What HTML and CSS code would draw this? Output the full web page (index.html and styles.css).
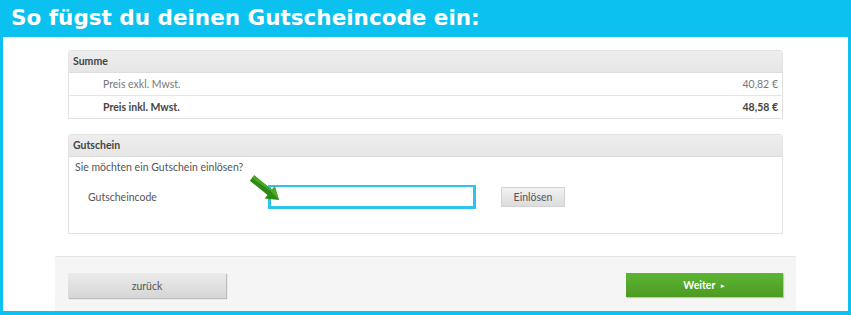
FILE: index.html
```html
<!DOCTYPE html>
<html lang="de">
 <head>
  <meta charset="UTF-8">
  <title>Gutschein</title>
  <link rel="stylesheet" href="styles.css">
 </head>
<body>
<div class="rahmen">
 <h1 class="titel">So fügst du deinen Gutscheincode ein:</h1>

 <div class="inhalt">

  <!-- Summe -->
  <div class="box">
   <div class="box-kopf">Summe</div>
   <div class="zeile">
    <span>Preis exkl. Mwst.</span>
    <span>40,82 €</span>
   </div>
   <div class="zeile fett">
    <span>Preis inkl. Mwst.</span>
    <span>48,58 €</span>
   </div>
  </div>

  <!-- Gutschein -->
  <div class="box gutschein">
   <div class="box-kopf">Gutschein</div>
   <p class="frage">Sie möchten ein Gutschein einlösen?</p>
   <div class="code-zeile">
    <label for="code">Gutscheincode</label>
    <div class="feld">
     <svg class="pfeil" width="32" height="30" viewBox="0 0 32 30">
      <polygon points="5.2,2.3 22.9,16.7 25.8,13.2 30,27 15.6,25.6 18.5,22.1 0.8,7.7" fill="#2E8A14"/>
      <polygon points="5.2,2.3 22.9,16.7 25.8,13.2 30,27 21,17.5 3,5" fill="#4AAA26"/>
     </svg>
     <input type="text" id="code">
    </div>
    <button type="button" class="einloesen">Einlösen</button>
   </div>
  </div>

 </div>

 <div class="fuss">
  <button type="button" class="zurueck">zurück</button>
  <button type="button" class="weiter">Weiter <span class="dreieck">&#9658;</span></button>
 </div>
</div>
</body>
</html>
```

FILE: styles.css
```css
body {
 margin: 0;
 background: #FFFFFF;
 font-family: Lato, Arial, sans-serif;
 font-size: 10.5px;
 color: #555555;
}

/* Rahmen */
.rahmen {
 box-sizing: border-box;
 width: 851px;
 height: 315px;
 border: Solid 3px #0BC1EF;
 border-bottom-width: 4px;
 border-top: 0;
 background: #FFFFFF;
}

.titel {
 margin: 0 -3px;
 height: 37px;
 padding-left: 11px;
 background: #0BC1EF;
 color: #FFFFFF;
 font-family: "DejaVu Sans", Verdana, sans-serif;
 font-weight: Bold;
 font-size: 21.5px;
 line-height: 36px;
}

.inhalt {
 padding: 13px 65px 0 65px;
}

/* Boxen */
.box {
 border: Solid 1px #E2E2E2;
 border-radius: 3px 3px 0 0;
 margin-bottom: 15px;
}

.box-kopf {
 height: 21px;
 line-height: 21px;
 padding-left: 4px;
 background: linear-gradient(#EEEEEE, #E6E6E6);
 border-bottom: Solid 1px #DDDDDD;
 font-weight: Bold;
 color: #444444;
}

.zeile {
 display: flex;
 justify-content: space-between;
 height: 22px;
 line-height: 22px;
 padding: 0 4px 0 34px;
 border-bottom: Solid 1px #E6E6E6;
 color: #777777;
}

.zeile:last-child {
 border-bottom: 0;
}

.zeile.fett {
 font-weight: Bold;
 color: #444444;
}

.gutschein {
 height: 98px;
 margin-bottom: 22px;
}

.frage {
 margin: 4px 0 0 6px;
 color: #555555;
}

.code-zeile {
 display: flex;
 align-items: center;
 margin-top: 12px;
}

.code-zeile label {
 width: 180px;
 padding-left: 19px;
}

.feld {
 position: relative;
}

.pfeil {
 position: absolute;
 left: -19px;
 top: -12px;
}

input#code {
 width: 202px;
 height: 19px;
 border: Solid 3px #2CC3EF;
 border-top-width: 2px;
 padding: 0;
 outline: 0;
 background: #FFFFFF;
}

button {
 font-family: Lato, Arial, sans-serif;
 font-size: 10.5px;
 cursor: Pointer;
}

.einloesen {
 margin-left: 25px;
 width: 64px;
 height: 20px;
 padding: 0;
 border: Solid 1px #D2D2D2;
 background: linear-gradient(#F2F2F2, #DCDCDC);
 color: #555555;
}

/* Fuss */
.fuss {
 display: flex;
 justify-content: space-between;
 align-items: flex-start;
 margin: 0 52px;
 height: 55px;
 padding: 16px 13px 0 13px;
 box-sizing: border-box;
 background: #F5F5F5;
 border-top: Solid 1px #E6E6E6;
}

.zurueck {
 width: 158px;
 height: 25px;
 border: 0;
 background: linear-gradient(#EBEBEB, #D6D6D6);
 box-shadow: 1px 1px 1px #BBBBBB;
 color: #555555;
}

.weiter {
 width: 157px;
 height: 24px;
 border: 0;
 background: linear-gradient(#5DB534, #4C9A22);
 box-shadow: 1px 1px 1px #C7C7A0;
 color: #FFFFFF;
 font-weight: Bold;
}

.dreieck {
 font-size: 6px;
 margin-left: 2px;
 vertical-align: 1px;
}
```
